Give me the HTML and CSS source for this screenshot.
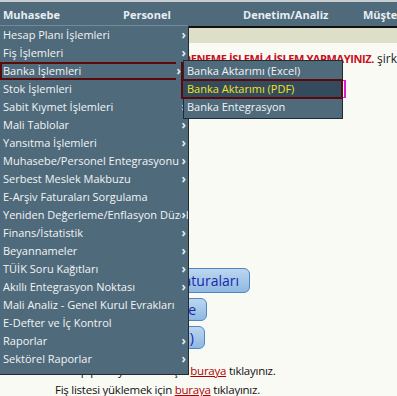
FILE: index.html
```html
<!DOCTYPE html>
<html lang="tr">
<head>
  <meta charset="UTF-8">
  <title>Muhasebe</title>
  <link rel="stylesheet" href="styles.css">
</head>
<body>
  <div class="topbar">
    <a class="top-item" href="#">Muhasebe</a>
    <a class="top-item" href="#">Personel</a>
    <a class="top-item" href="#">Denetim/Analiz</a>
    <a class="top-item" href="#">Müşteri</a>
  </div>

  <div class="page">
    <div class="band"></div>
    <div class="content">
      <p class="warning"><span class="warn-text">DENEME İŞLEMİ 4 İŞLEM YAPMAYINIZ.</span> şirket</p>

      <div class="buttons">
        <button class="btn btn-wide">Gelen E-Faturaları</button>
        <button class="btn btn-mid">Liste</button>
        <button class="btn btn-mid">(E)</button>
      </div>

      <div class="links">
        <p>Hesap planı yüklemek için <a href="#">buraya</a> tıklayınız.</p>
        <p>Fiş listesi yüklemek için <a href="#">buraya</a> tıklayınız.</p>
      </div>
    </div>
  </div>

  <!-- acik menu -->
  <ul class="menu">
    <li class="has-sub">Hesap Planı İşlemleri</li>
    <li class="has-sub">Fiş İşlemleri</li>
    <li class="has-sub active">Banka İşlemleri</li>
    <li class="has-sub">Stok İşlemleri</li>
    <li class="has-sub">Sabit Kıymet İşlemleri</li>
    <li class="has-sub">Mali Tablolar</li>
    <li class="has-sub">Yansıtma İşlemleri</li>
    <li class="has-sub">Muhasebe/Personel Entegrasyonu</li>
    <li class="has-sub">Serbest Meslek Makbuzu</li>
    <li>E-Arşiv Faturaları Sorgulama</li>
    <li class="has-sub">Yeniden Değerleme/Enflasyon Düzeltmesi</li>
    <li class="has-sub">Finans/İstatistik</li>
    <li class="has-sub">Beyannameler</li>
    <li class="has-sub">TÜİK Soru Kağıtları</li>
    <li class="has-sub">Akıllı Entegrasyon Noktası</li>
    <li>Mali Analiz - Genel Kurul Evrakları</li>
    <li>E-Defter ve İç Kontrol</li>
    <li class="has-sub">Raporlar</li>
    <li class="has-sub">Sektörel Raporlar</li>
  </ul>

  <ul class="submenu">
    <li>Banka Aktarımı (Excel)</li>
    <li class="current">Banka Aktarımı (PDF)</li>
    <li>Banka Entegrasyon</li>
  </ul>
</body>
</html>
```

FILE: styles.css
```css
  body {
    margin: 0;
    padding: 0;
    font-family: 'Open Sans', sans-serif;
    background: #fafaf5;
    color: #222;
    overflow: hidden;
  }
  .topbar {
    display: flex;
    height: 24px;
    align-items: center;
    background: #4f6a7b;
    border-top: 2px solid #c9cdd0;
    overflow: hidden;
  }
  .top-item {
    flex-shrink: 0;
    width: 117px;
    padding-left: 3px;
    color: #e8eef2;
    font-weight: bold;
    font-size: 11px;
    text-decoration: none;
    white-space: nowrap;
  }
  .page {
    border-top: 2px solid #111;
  }
  .band {
    height: 15px;
    background: #dedfc9;
  }
  .content {
    padding: 0 0 0 55px;
    font-size: 11.5px;
  }
  .warning {
    margin: 7px 0 0 0;
    font-size: 12px;
    white-space: nowrap;
  }
  .warn-text {
    color: #c8101c;
    font-weight: bold;
    font-size: 11px;
    letter-spacing: -0.4px;
    margin-left: 128px;
  }
  .buttons {
    display: flex;
    flex-direction: column;
    align-items: flex-start;
    gap: 5px;
    margin-top: 201px;
  }
  .btn {
    font-family: inherit;
    font-size: 14px;
    color: #1a28a8;
    background: linear-gradient(#bcd6ef, #8fb8e2);
    border: 1px solid #4f86c6;
    border-radius: 6px;
    padding: 2px 10px;
    height: 25px;
  }
  .btn-wide { width: 195px; text-align: right; }
  .btn-mid { width: 152px; text-align: right; height: 23px; padding-top: 0; padding-bottom: 0; }
  .btn-mid + .btn-mid { width: 150px; }
  .links p {
    margin: 0;
    height: 19px;
    line-height: 19px;
    color: #111;
    letter-spacing: -0.25px;
  }
  .links {
    margin-top: 12px;
  }
  .links a {
    color: #b00000;
  }

  /* dropdown */
  .menu {
    position: absolute;
    left: 0;
    top: 25px;
    width: 188px;
    margin: 0;
    padding: 0 0 6px 0;
    list-style: none;
    background: #4f6a7b;
    border-right: 1px solid #222b30;
    border-top: 1px solid #75899a;
    border-bottom: 1px solid #222b30;
  }
  .menu li, .submenu li {
    position: relative;
    height: 18px;
    line-height: 18px;
    padding-left: 3px;
    color: #f2f4f5;
    font-size: 11px;
    white-space: nowrap;
    overflow: hidden;
    padding-right: 10px;
  }
  .menu li.has-sub::after {
    content: "\203A";
    position: absolute;
    right: 2px;
    top: 0;
    font-weight: bold;
    font-size: 12px;
    color: #e6ecf0;
    background: #4f6a7b;
    padding-left: 1px;
  }
  .menu li.active {
    outline: 2px solid #5a0a0a;
    outline-offset: -2px;
    margin-right: 5px;
  }
  .submenu {
    position: absolute;
    left: 183px;
    top: 60px;
    width: 158px;
    margin: 0;
    padding: 1px 0 2px 0;
    list-style: none;
    background: #4f6a7b;
    border: 1px solid #222b30;
  }
  .submenu li.current {
    background: #344b5d;
    color: #f3e31a;
    outline: 2px solid #5a0a0a;
    outline-offset: -1px;
    margin-left: -2px;
    padding-left: 5px;
    box-shadow: 3px 0 0 -1px #fafaf5, 4px 0 0 0 #e21bd0;
    overflow: visible;
  }
```
